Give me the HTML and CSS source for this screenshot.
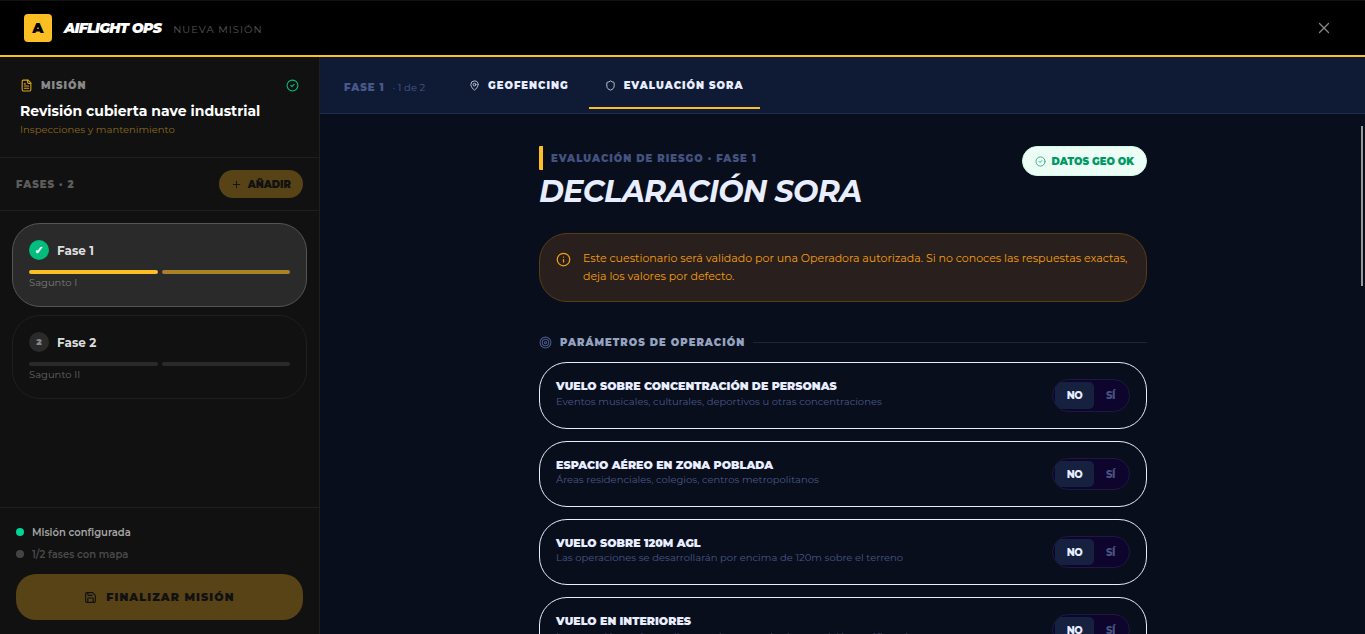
FILE: index.html
```html
<!DOCTYPE html>
<html lang="es">
<head>
<meta charset="utf-8">
<title>AIFlight Ops · Nueva misión</title>
<link rel="stylesheet" href="styles.css">
</head>
<body>
<header class="topbar">
  <div class="logo">A</div>
  <span class="brand">AIFLIGHT OPS</span>
  <span class="crumb">NUEVA MISIÓN</span>
  <svg class="icon close" width="18" height="18" viewBox="0 0 24 24"><path d="M18 6 6 18M6 6l12 12"/></svg>
</header>
<div class="layout">
  <aside class="sidebar">
    <section class="mission">
      <div class="mission-head">
        <svg class="icon file" width="13" height="13" viewBox="0 0 24 24"><path d="M15 2H6a2 2 0 0 0-2 2v16a2 2 0 0 0 2 2h12a2 2 0 0 0 2-2V7Z"/><path d="M14 2v4a2 2 0 0 0 2 2h4M10 9H8M16 13H8M16 17H8"/></svg>
        <span class="label">MISIÓN</span>
        <svg class="icon done" width="13" height="13" viewBox="0 0 24 24"><circle cx="12" cy="12" r="10"/><path d="m9 12 2 2 4-4"/></svg>
      </div>
      <div class="mission-name">Revisión cubierta nave industrial</div>
      <div class="mission-type">Inspecciones y mantenimiento</div>
    </section>
    <section class="phases-head">
      <span class="label dim">FASES · 2</span>
      <button class="add"><svg class="icon" width="11" height="11" viewBox="0 0 24 24"><path d="M5 12h14M12 5v14"/></svg>AÑADIR</button>
    </section>
    <section class="phases">
      <article class="phase active">
        <div class="phase-title"><span class="num ok">✓</span>Fase 1</div>
        <div class="bars"><i class="full"></i><i class="half"></i></div>
        <div class="place">Sagunto I</div>
      </article>
      <article class="phase">
        <div class="phase-title"><span class="num">2</span>Fase 2</div>
        <div class="bars"><i></i><i></i></div>
        <div class="place">Sagunto II</div>
      </article>
    </section>
    <footer class="summary">
      <div class="status on"><b></b>Misión configurada</div>
      <div class="status"><b></b>1/2 fases con mapa</div>
      <button class="finish"><svg class="icon" width="13" height="13" viewBox="0 0 24 24"><path d="M15.2 3a2 2 0 0 1 1.4.6l3.8 3.8a2 2 0 0 1 .6 1.4V19a2 2 0 0 1-2 2H5a2 2 0 0 1-2-2V5a2 2 0 0 1 2-2z"/><path d="M17 21v-7a1 1 0 0 0-1-1H8a1 1 0 0 0-1 1v7M7 3v4a1 1 0 0 0 1 1h7"/></svg>FINALIZAR MISIÓN</button>
    </footer>
  </aside>
  <main class="main">
    <nav class="tabs">
      <div class="phase-ref"><strong>FASE 1</strong><span>· 1 de 2</span></div>
      <a class="tab"><svg class="icon" width="11" height="11" viewBox="0 0 24 24"><path d="M20 10c0 5-5.500 10.200-7.400 11.800a1 1 0 0 1-1.200 0C9.500 20.200 4 15 4 10a8 8 0 0 1 16 0"/><circle cx="12" cy="10" r="3"/></svg>GEOFENCING</a>
      <a class="tab current"><svg class="icon" width="11" height="11" viewBox="0 0 24 24"><path d="M20 13c0 5-3.500 7.500-7.660 8.950a1 1 0 0 1-.67-.01C7.500 20.500 4 18 4 13V6a1 1 0 0 1 1-1c2 0 4.500-1.200 6.240-2.720a1.170 1.170 0 0 1 1.520 0C14.510 3.810 17 5 19 5a1 1 0 0 1 1 1z"/></svg>EVALUACIÓN SORA</a>
    </nav>
    <div class="content">
      <div class="intro">
        <div>
          <div class="eyebrow">EVALUACIÓN DE RIESGO · FASE 1</div>
          <h1>DECLARACIÓN SORA</h1>
        </div>
        <span class="badge"><svg class="icon" width="11" height="11" viewBox="0 0 24 24"><circle cx="12" cy="12" r="10"/><path d="m9 12 2 2 4-4"/></svg>DATOS GEO OK</span>
      </div>
      <div class="notice">
        <svg class="icon" width="15" height="15" viewBox="0 0 24 24"><circle cx="12" cy="12" r="10"/><path d="M12 16v-4M12 8h.01"/></svg>
        <p>Este cuestionario será validado por una Operadora autorizada. Si no conoces las respuestas exactas, deja los valores por defecto.</p>
      </div>
      <h2 class="section"><svg class="icon" width="13" height="13" viewBox="0 0 24 24"><circle cx="12" cy="12" r="10"/><circle cx="12" cy="12" r="6"/><circle cx="12" cy="12" r="2"/></svg><span>PARÁMETROS DE OPERACIÓN</span></h2>
      <div class="questions">
        <div class="question"><div><h3>VUELO SOBRE CONCENTRACIÓN DE PERSONAS</h3><p>Eventos musicales, culturales, deportivos u otras concentraciones</p></div><div class="toggle"><span class="sel">NO</span><span>SÍ</span></div></div>
        <div class="question"><div><h3>ESPACIO AÉREO EN ZONA POBLADA</h3><p>Áreas residenciales, colegios, centros metropolitanos</p></div><div class="toggle"><span class="sel">NO</span><span>SÍ</span></div></div>
        <div class="question"><div><h3>VUELO SOBRE 120M AGL</h3><p>Las operaciones se desarrollarán por encima de 120m sobre el terreno</p></div><div class="toggle"><span class="sel">NO</span><span>SÍ</span></div></div>
        <div class="question"><div><h3>VUELO EN INTERIORES</h3><p>La operación se desarrolla en recinto cerrado sin exposición a tráfico aéreo</p></div><div class="toggle"><span class="sel">NO</span><span>SÍ</span></div></div>
      </div>
    </div>
    <div class="scroll-thumb"></div>
  </main>
</div>
</body>
</html>
```
FILE: styles.css
```css
* { box-sizing: border-box; margin: 0; padding: 0; }
html, body { height: 100%; overflow: hidden; }
body {
  display: flex; flex-direction: column;
  background: #080e1b; color: #fff;
  font: 400 10px/15px Montserrat, Inter, sans-serif;
}
.icon { fill: none; stroke: currentColor; stroke-width: 2; stroke-linecap: round; stroke-linejoin: round; flex: none; display: block; }
button { font: inherit; border: 0; }

.topbar {
  flex: none; height: 57px; padding: 0 32px 0 24px;
  display: flex; align-items: center;
  background: #000; border-top: 1px solid #111; border-bottom: 2px solid #fbbf24;
}
.logo { width: 28px; height: 28px; border-radius: 4px; background: #fbbf24; color: #000; font-weight: 900; font-size: 14px; line-height: 28px; text-align: center; }
.brand { margin-left: 12px; font-size: 14px; font-weight: 900; font-style: italic; letter-spacing: -.7px; }
.crumb { margin: 3px 0 0 12px; letter-spacing: 1px; color: #555; }
.close { margin-left: auto; color: #888; stroke-width: 1.7; }

.layout { flex: 1; min-height: 0; display: flex; }
.sidebar { width: 320px; flex: none; display: flex; flex-direction: column; background: #111; border-right: 1px solid #1f1f1f; }
.label { font-weight: 900; letter-spacing: 1px; color: #888; }
.label.dim { color: #5c5c5c; }
.mission { height: 101px; padding: 21px 20px 0; border-bottom: 1px solid #1f1f1f; }
.mission-head { display: flex; align-items: center; gap: 8px; }
.file { color: #fbbf24; opacity: .85; }
.done { margin-left: auto; color: #00bc7d; }
.mission-name { margin-top: 8px; font-size: 14px; line-height: 21px; font-weight: 700; }
.mission-type { color: #8c691e; }
.phases-head { height: 53px; padding: 0 16px; display: flex; align-items: center; justify-content: space-between; border-bottom: 1px solid #1f1f1f; }
.add { height: 28px; padding: 0 12px; display: flex; align-items: center; gap: 6px; border-radius: 14px; background: #574316; color: #111; font-weight: 900; }
.phases { flex: 1; padding: 12px; display: flex; flex-direction: column; gap: 8px; }
.phase { height: 84px; padding: 16px; border: 1px solid #1f1f1f; border-radius: 28px; }
.phase.active { background: #2a2a2a; border-color: #555; }
.phase-title { display: flex; align-items: center; gap: 8px; height: 20px; font-size: 12px; font-weight: 700; color: #ddd; }
.num { width: 20px; height: 20px; border-radius: 50%; background: #2a2a2a; color: #888; font-size: 9px; font-weight: 900; line-height: 20px; text-align: center; }
.num.ok { background: #00bc7d; color: #fff; font-family: "DejaVu Sans", sans-serif; font-weight: 700; font-size: 11px; line-height: 21px; -webkit-text-stroke: .6px #fff; }
.bars { display: flex; gap: 4px; margin-top: 10px; }
.bars i { flex: 1; height: 4px; border-radius: 2px; background: #2a2a2a; }
.bars .full { background: #fbbf24; }
.bars .half { background: #a88226; }
.place { color: #636363; margin-top: 1px; }
.active .place { color: #7a7a7a; }
.summary { height: 127px; padding: 17px 16px 0; border-top: 1px solid #1f1f1f; }
.status { display: flex; align-items: center; gap: 8px; height: 15px; margin-bottom: 7px; font-weight: 600; color: #4a4a4a; }
.status b { width: 8px; height: 8px; margin-top: -1px; border-radius: 50%; background: #444; }
.status.on { color: #a5a5a5; }
.status.on b { background: #00d492; }
.finish { width: 287px; height: 46px; margin-top: 12px; display: flex; align-items: center; justify-content: center; gap: 9px; border-radius: 20px; background: #574316; color: #111; font-size: 11px; font-weight: 900; letter-spacing: 1.1px; }
.status + .status { margin-bottom: 0; }

.main { position: relative; flex: 1; min-width: 0; display: flex; flex-direction: column; overflow: hidden; }
.tabs { flex: none; height: 57px; padding: 0 24px; display: flex; align-items: flex-start; background: #0f1b35; border-bottom: 1px solid #222d48; }
.phase-ref { width: 109px; padding-top: 23px; display: flex; gap: 8px; color: #48578a; white-space: nowrap; }
.phase-ref strong { font-weight: 900; letter-spacing: 1px; }
.tab { height: 52px; padding: 7px 16px 0; display: flex; align-items: center; gap: 8px; font-weight: 900; letter-spacing: 1px; color: #e8edff; border-bottom: 2px solid transparent; white-space: nowrap; }
.tab + .tab { margin-left: 4px; }
.tab.current { border-color: #fbbf24; }
.tab .icon { opacity: .85; }
.content { width: 608px; margin: 0 auto; padding-top: 32px; position: relative; left: .5px; }
.intro { display: flex; justify-content: space-between; align-items: flex-start; }
.eyebrow { height: 24px; padding-left: 8px; border-left: 4px solid #fbbf24; border-radius: 1px; font-weight: 900; letter-spacing: 1px; line-height: 26px; color: #435280; }
h1 { margin-top: 3px; font-size: 30px; line-height: 37px; font-weight: 700; font-style: italic; letter-spacing: -.6px; color: #e8edff; }
.badge { height: 30px; padding: 0 12px; display: flex; align-items: center; gap: 6px; border: 1px solid #d0fae5; border-radius: 15px; background: #ecfdf5; color: #009966; font-weight: 900; }
.badge .icon { opacity: .8; }
.notice { height: 69px; margin-top: 23px; padding: 16px; display: flex; gap: 12px; border: 1px solid #573d14; border-radius: 28px; background: #29201d; color: #f59e0b; font-size: 11px; line-height: 17.9px; }
.notice .icon { margin-top: 2px; }
.section { display: flex; align-items: center; gap: 8px; height: 15px; margin: 33px 0 12.4px; font-size: 10px; font-weight: 900; letter-spacing: 1px; color: #94a3c0; }
.section .icon { color: #48578a; }
.section::after { content: ""; flex: 1; height: 1px; background: #1e2535; }
.questions { display: flex; flex-direction: column; gap: 12px; }
.question { height: 66.25px; flex: none; padding: 16px; display: flex; justify-content: space-between; border: 1px solid #e8edff; border-radius: 28px; }
.question h3 { font-size: 11px; line-height: 14px; font-weight: 900; color: #e8edff; }
.question p { color: #485688; margin-top: .4px; }
.toggle { height: 32.25px; width: 78px; padding: 2px; display: flex; border: 1px solid #1e1a3c; border-radius: 17px; overflow: hidden; background: #0d052d; font-size: 10px; font-weight: 800; letter-spacing: -.4px; }
.toggle span { flex: 1; border-radius: 5px; line-height: 27px; text-align: center; color: #485380; }
.toggle .sel { flex: none; width: 39px; background: #15213f; color: #e8edff; }
.scroll-thumb { position: absolute; right: 2px; top: 69px; width: 2px; height: 160px; background: #999; }
```
